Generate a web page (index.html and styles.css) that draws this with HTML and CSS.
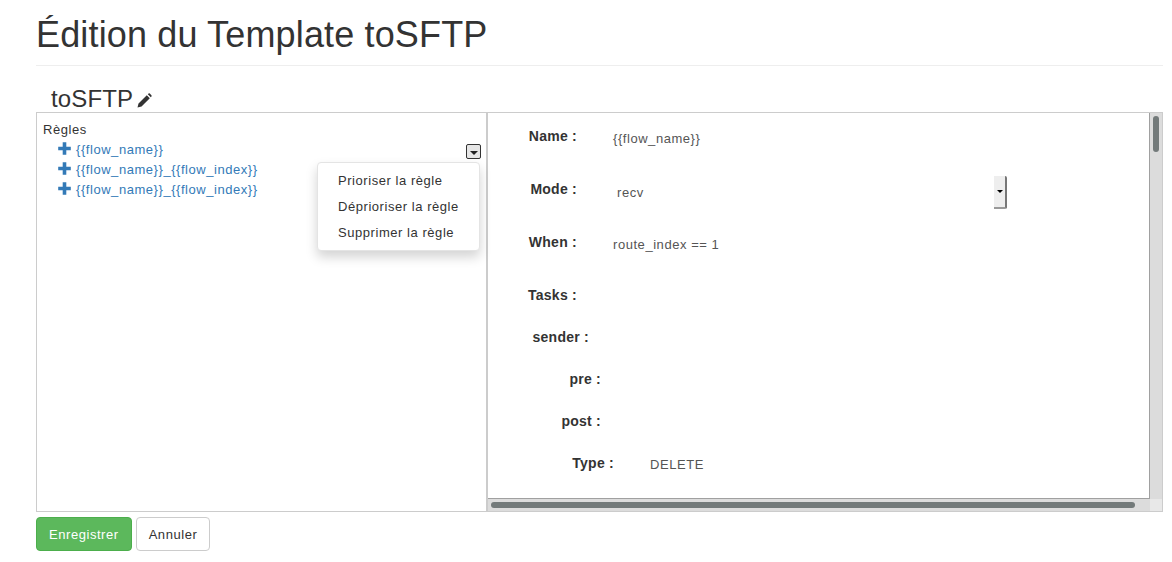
FILE: index.html
```html
<!DOCTYPE html>
<html lang="fr">
<head>
<meta charset="utf-8">
<title>Édition du Template toSFTP</title>
<link rel="stylesheet" href="styles.css">
</head>
<body>
<div class="page">
    <h1 class="page_title">Édition du Template toSFTP</h1>
    <h3 class="tpl_name">toSFTP
        <svg class="pencil" width="15" height="15" viewBox="0 0 15 15"><path d="M0.5 14.5 L1.5 10.5 L9.8 2.2 L12.8 5.2 L4.5 13.5 Z M10.8 1.2 L11.6 0.5 Q12.2 0.1 12.8 0.6 L14.4 2.2 Q14.9 2.8 14.5 3.4 L13.8 4.2 Z" fill="#333"/></svg>
    </h3>
    <div class="editor">
        <div class="tree_pane">
            <div class="tree_title">Règles</div>
            <ul class="tree">
                <li><svg class="plus" viewBox="0 0 13 13"><path d="M4.7 0.3 H8.3 V4.7 H12.8 V8.3 H8.3 V12.7 H4.7 V8.3 H0.2 V4.7 H4.7 Z" fill="#337ab7"/></svg><a>{{flow_name}}</a></li>
                <li><svg class="plus" viewBox="0 0 13 13"><path d="M4.7 0.3 H8.3 V4.7 H12.8 V8.3 H8.3 V12.7 H4.7 V8.3 H0.2 V4.7 H4.7 Z" fill="#337ab7"/></svg><a>{{flow_name}}_{{flow_index}}</a></li>
                <li><svg class="plus" viewBox="0 0 13 13"><path d="M4.7 0.3 H8.3 V4.7 H12.8 V8.3 H8.3 V12.7 H4.7 V8.3 H0.2 V4.7 H4.7 Z" fill="#337ab7"/></svg><a>{{flow_name}}_{{flow_index}}</a></li>
            </ul>
            <span class="menu_toggle"><span class="caret"></span></span>
            <ul class="menu">
                <li>Prioriser la règle</li>
                <li>Déprioriser la règle</li>
                <li>Supprimer la règle</li>
            </ul>
        </div>
        <div class="form_pane">
            <div class="form_view">
                <div class="row row_big"><label>Name :</label><span class="value">{{flow_name}}</span></div>
                <div class="row row_big"><label>Mode :</label>
                    <span class="select"><span class="select_text">recv</span><span class="select_btn"><span class="select_arrow"></span></span></span>
                </div>
                <div class="row row_big"><label>When :</label><span class="value">route_index == 1</span></div>
                <div class="row"><label>Tasks :</label></div>
                <div class="row lvl1"><label>sender :</label></div>
                <div class="row lvl2"><label>pre :</label></div>
                <div class="row lvl2"><label>post :</label></div>
                <div class="row lvl3"><label>Type :</label><span class="value value_big">DELETE</span></div>
            </div>
            <div class="vbar"><span class="vthumb"></span></div>
            <div class="hbar"><span class="hthumb"></span></div>
            <div class="corner"></div>
        </div>
    </div>
    <div class="actions">
        <button class="btn btn_ok">Enregistrer</button>
        <button class="btn">Annuler</button>
    </div>
</div>
</body>
</html>
```

FILE: styles.css
```css
* {
    box-sizing: border-box;
}
body {
    margin: 0;
    font-family: "Liberation Sans", Arial, sans-serif;
    font-size: 13px;
    letter-spacing: .55px;
    color: #333;
    background-color: #fff;
}
.page {
    width: 1127px;
    margin-left: 36px;
}
.page_title {
    margin: 0;
    height: 66px;
    padding-top: 15px;
    font-size: 36px;
    line-height: 40px;
    font-weight: 400;
    letter-spacing: .15px;
    border-bottom: 1px solid #eee;
}
.tpl_name {
    margin: 0;
    height: 46px;
    padding: 19px 0 0 15px;
    font-size: 24px;
    line-height: 28px;
    font-weight: 400;
    letter-spacing: .15px;
    display: flex;
    align-items: flex-start;
    gap: 4px;
}
.pencil {
    margin-top: 8px;
}
.editor {
    display: flex;
    height: 400px;
    border: 1px solid #ccc;
}
.tree_pane {
    position: relative;
    width: 451px;
    flex: none;
    padding: 9px 6px;
    border-right: 2px solid #ccc;
}
.tree_title {
    line-height: 16px;
}
.tree {
    list-style: none;
    margin: 2px 0 0;
    padding: 0 0 0 15px;
}
.tree li {
    height: 20px;
    line-height: 20px;
    display: flex;
    align-items: center;
}
.plus {
    width: 13px;
    height: 13px;
    margin-right: 5px;
    margin-top: -3px;
}
.tree a {
    color: #337ab7;
}
.menu_toggle {
    position: absolute;
    left: 429px;
    top: 31px;
    width: 15px;
    height: 15px;
    border: 1px solid #333;
    border-radius: 2px;
    background-color: #e6e6e6;
    display: flex;
    align-items: center;
    justify-content: center;
}
.caret {
    border-top: 4px solid #222;
    border-left: 4px solid transparent;
    border-right: 4px solid transparent;
    margin-top: 2px;
}
.menu {
    position: absolute;
    left: 280px;
    top: 49px;
    width: 163px;
    height: 89px;
    margin: 0;
    padding: 5px 0;
    list-style: none;
    background-color: #fff;
    border: 1px solid #e4e4e4;
    border-radius: 4px;
    box-shadow: 0 6px 12px rgba(0, 0, 0, .175);
}
.menu li {
    height: 26px;
    line-height: 26px;
    padding-left: 20px;
}
.form_pane {
    flex: 1;
    display: grid;
    grid-template-columns: 1fr 12px;
    grid-template-rows: 1fr 12px;
    min-width: 0;
}
.form_view {
    padding-top: 13px;
    border-right: 1px solid #a0a0a0;
    border-bottom: 1px solid #a0a0a0;
    overflow: hidden;
}
.row {
    display: flex;
    height: 42px;
    line-height: 20px;
    align-items: flex-start;
}
.row_big {
    height: 53px;
}
.row label {
    width: 89px;
    text-align: right;
    font-weight: 700;
    font-size: 14px;
    letter-spacing: .25px;
}
.lvl1 label {
    width: 101px;
}
.lvl2 label {
    width: 113px;
}
.lvl3 label {
    width: 126px;
}
.value {
    margin-left: 36px;
    margin-top: 3px;
    color: #555;
}
.value_big {
    margin-top: 2px;
}
.select {
    margin-left: 36px;
    width: 394px;
    height: 33px;
    margin-top: -3px;
    display: flex;
    justify-content: space-between;
    align-items: center;
    color: #555;
}
.select_text {
    padding-left: 4px;
}
.select_btn {
    width: 13px;
    height: 33px;
    background-color: #eee;
    border-right: 2px solid #777;
    border-bottom: 2px solid #999;
    border-radius: 0 2px 2px 0;
    display: flex;
    align-items: center;
    justify-content: center;
}
.select_arrow {
    border-top: 3px solid #000;
    border-left: 3px solid transparent;
    border-right: 3px solid transparent;
}
.vbar {
    background-color: #dcdcdc;
    padding: 3px 3px 0;
}
.vthumb {
    display: block;
    width: 6px;
    height: 36px;
    border-radius: 3px;
    background-color: #737a7a;
}
.hbar {
    background-color: #dcdcdc;
    padding: 3px 3px 0;
}
.hthumb {
    display: block;
    width: 644px;
    height: 6px;
    border-radius: 3px;
    background-color: #737a7a;
}
.corner {
    background-color: #e8e8e8;
}
.actions {
    display: flex;
    gap: 4px;
    margin-top: 5px;
}
.btn {
    height: 34px;
    padding: 0 12px;
    font-family: inherit;
    font-size: 13px;
    letter-spacing: .55px;
    color: #333;
    background-color: #fff;
    border: 1px solid #ccc;
    border-radius: 4px;
}
.btn_ok {
    color: #fff;
    background-color: #5cb85c;
    border-color: #4cae4c;
}
```
